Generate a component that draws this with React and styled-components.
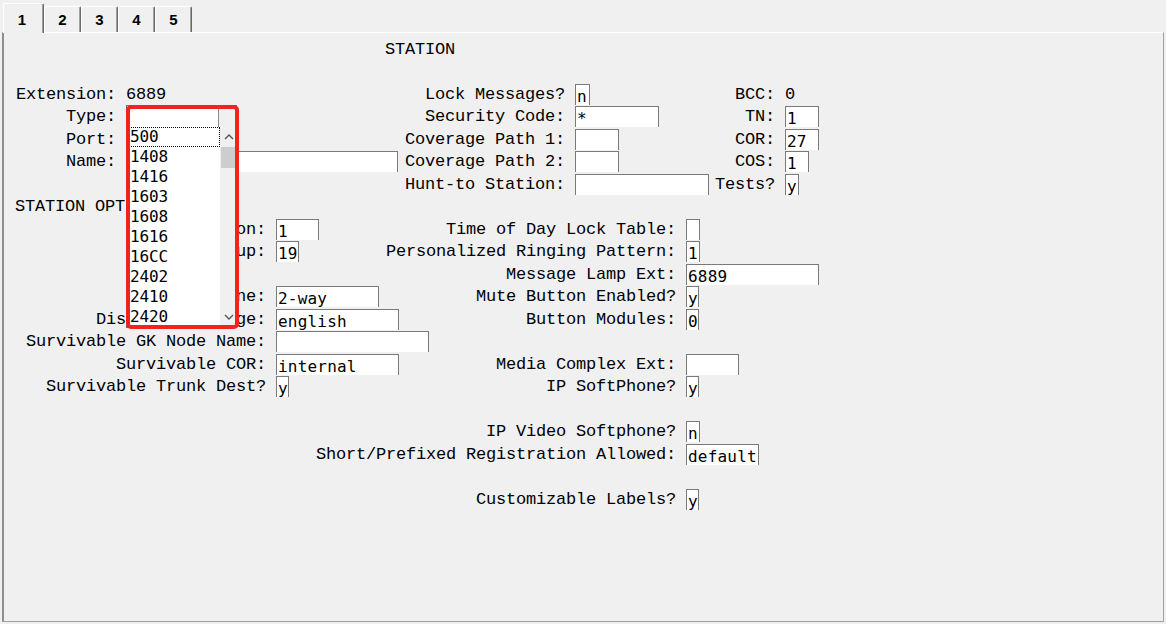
import React from 'react';
import styled, { createGlobalStyle, css } from 'styled-components';

const GlobalStyle = createGlobalStyle`
  html, body {
    margin: 0;
    padding: 0;
    background: #f0f0f0;
  }
  body {
    width: 1166px;
    height: 624px;
    overflow: hidden;
  }
`;

const Window = styled.div`
  position: relative;
  width: 1166px;
  height: 624px;
  display: flex;
  flex-direction: column;
  background: #f0f0f0;
  color: #000;
  font-family: 'Liberation Mono', monospace;
`;

const TabStrip = styled.div`
  display: flex;
  align-items: flex-end;
  height: 32px;
  padding-left: 3px;
  position: relative;
  z-index: 1;
`;

const Tab = styled.div`
  box-sizing: border-box;
  display: flex;
  justify-content: center;
  align-items: center;
  border-top: 1px solid #fff;
  border-left: 1px solid #fff;
  border-right: 1px solid #696969;
  box-shadow: inset -1px 0 0 #a0a0a0;
  border-radius: 2px 2px 0 0;
  background: #f0f0f0;
  font-family: 'Liberation Sans', Arial, sans-serif;
  font-weight: bold;
  font-size: 15px;
  ${(p) =>
    p.active
      ? css`
          width: 41px;
          height: 30px;
          margin-bottom: -1px;
          padding: 2px 3px 0 0;
        `
      : css`
          width: 37px;
          height: 26px;
        `}
`;

const Panel = styled.div`
  flex: 1;
  margin: 0 2px 2px 2px;
  border-top: 1px solid #fff;
  border-left: 2px solid #8e8e8e;
  border-right: 1px solid #a0a0a0;
  border-bottom: 1px solid #a0a0a0;
  padding-top: 5.5px;
`;

const Title = styled.div`
  width: 832px;
  height: 22.5px;
  line-height: 22.5px;
  text-align: center;
  font-size: 17px;
  letter-spacing: -0.2px;
`;

const Row = styled.div`
  display: grid;
  grid-template-columns: ${(p) => p.cols};
  height: 22.5px;
  align-items: center;
`;

const Heading = styled.div`
  height: 22.5px;
  line-height: 22.5px;
  padding-left: 11px;
  font-size: 17px;
  letter-spacing: -0.2px;
  white-space: nowrap;
`;

const Label = styled.div`
  min-width: 0;
  display: flex;
  justify-content: flex-end;
  white-space: nowrap;
  font-size: 17px;
  letter-spacing: -0.2px;
  line-height: 22px;
`;

const Value = styled.div`
  min-width: 0;
  display: flex;
  align-items: center;
  padding-left: 10px;
  white-space: nowrap;
  font-size: 17px;
  letter-spacing: -0.2px;
`;

const Field = styled.div`
  box-sizing: border-box;
  flex: none;
  width: ${(p) => p.w}px;
  height: 21px;
  margin-top: -1px;
  background: #fff;
  border: 1px solid #7a7a7a;
  border-bottom: none;
  padding: 2px 0 0 1px;
  font-family: 'DejaVu Sans Mono', monospace;
  font-size: 16px;
  letter-spacing: 0.2px;
  line-height: 19px;
  overflow: hidden;
  white-space: nowrap;
`;

const Dropdown = styled.div`
  position: absolute;
  left: 126px;
  top: 105px;
  width: 111px;
  z-index: 2;
`;

const Combo = styled.div`
  box-sizing: border-box;
  display: grid;
  grid-template-columns: 1fr 18px;
  height: 22px;
  border-left: 1px solid #646464;
  border-top: 1px solid #7a7a7a;
`;

const ComboText = styled.div`
  background: #fff;
  border-right: 1px solid #8a8a8a;
`;

const ComboButton = styled.div`
  background: #f0f0f0;
`;

const List = styled.div`
  box-sizing: border-box;
  display: grid;
  grid-template-columns: 1fr 17px;
  height: 201px;
  background: #fff;
  border-left: 1px solid #646464;
  border-bottom: 1px solid #7a7a7a;
`;

const Items = styled.div`
  display: flex;
  flex-direction: column;
`;

const Item = styled.div`
  box-sizing: border-box;
  height: 20px;
  line-height: 20px;
  padding-left: 3px;
  font-family: 'DejaVu Sans Mono', monospace;
  font-size: 16px;
  letter-spacing: -0.1px;
  ${(p) =>
    p.focused &&
    css`
      outline: 1px dotted #000;
      outline-offset: -1px;
    `}
`;

const ScrollBar = styled.div`
  display: flex;
  flex-direction: column;
  background: #f0f0f0;
`;

const ScrollArrow = styled.div`
  height: 20px;
  display: flex;
  align-items: center;
  justify-content: center;
`;

const Thumb = styled.div`
  height: 21px;
  margin: 0 1px;
  background: #cdcdcd;
`;

const Track = styled.div`
  flex: 1;
`;

const Highlight = styled.div`
  position: absolute;
  left: 126px;
  top: 105px;
  width: 113px;
  height: 224px;
  box-sizing: border-box;
  border: 4px solid #f2231c;
  border-radius: 5px;
  pointer-events: none;
  z-index: 3;
`;

const Chevron = ({ down }) => (
  <svg width="10" height="6" viewBox="0 0 10 6">
    <polyline
      points={down ? '1,1 5,5 9,1' : '1,5 5,1 9,5'}
      fill="none"
      stroke="#555"
      strokeWidth="1.4"
    />
  </svg>
);

const TOP = '112px 288px 161px 146px 64px 1fr';
const LOW = '262px 170px 240px 1fr';

const ports = ['500', '1408', '1416', '1603', '1608', '1616', '16CC', '2402', '2410', '2420'];

const App = () => {
  return (
    <Window>
      <GlobalStyle />
      <TabStrip>
        <Tab active>1</Tab>
        <Tab>2</Tab>
        <Tab>3</Tab>
        <Tab>4</Tab>
        <Tab>5</Tab>
      </TabStrip>
      <Panel>
        <Title>STATION</Title>
        <Row cols={TOP} />

        <Row cols={TOP}>
          <Label>Extension:</Label>
          <Value>6889</Value>
          <Label>Lock Messages?</Label>
          <Value><Field w={15}>n</Field></Value>
          <Label>BCC:</Label>
          <Value>0</Value>
        </Row>
        <Row cols={TOP}>
          <Label>Type:</Label>
          <Value><Field w={110} /></Value>
          <Label>Security Code:</Label>
          <Value><Field w={84}>*</Field></Value>
          <Label>TN:</Label>
          <Value><Field w={34}>1</Field></Value>
        </Row>
        <Row cols={TOP}>
          <Label>Port:</Label>
          <Value><Field w={92} /></Value>
          <Label>Coverage Path 1:</Label>
          <Value><Field w={44} /></Value>
          <Label>COR:</Label>
          <Value><Field w={34}>27</Field></Value>
        </Row>
        <Row cols={TOP}>
          <Label>Name:</Label>
          <Value><Field w={272} /></Value>
          <Label>Coverage Path 2:</Label>
          <Value><Field w={44} /></Value>
          <Label>COS:</Label>
          <Value><Field w={24}>1</Field></Value>
        </Row>
        <Row cols={TOP}>
          <Label />
          <Value />
          <Label>Hunt-to Station:</Label>
          <Value><Field w={134} /></Value>
          <Label>Tests?</Label>
          <Value><Field w={14}>y</Field></Value>
        </Row>

        <Heading>STATION OPTIONS</Heading>

        <Row cols={LOW}>
          <Label>Location:</Label>
          <Value><Field w={43}>1</Field></Value>
          <Label>Time of Day Lock Table:</Label>
          <Value><Field w={14} /></Value>
        </Row>
        <Row cols={LOW}>
          <Label>Loss Group:</Label>
          <Value><Field w={23}>19</Field></Value>
          <Label>Personalized Ringing Pattern:</Label>
          <Value><Field w={14}>1</Field></Value>
        </Row>
        <Row cols={LOW}>
          <Label />
          <Value />
          <Label>Message Lamp Ext:</Label>
          <Value><Field w={133}>6889</Field></Value>
        </Row>
        <Row cols={LOW}>
          <Label>Speakerphone:</Label>
          <Value><Field w={103}>2-way</Field></Value>
          <Label>Mute Button Enabled?</Label>
          <Value><Field w={13}>y</Field></Value>
        </Row>
        <Row cols={LOW}>
          <Label>Display Language:</Label>
          <Value><Field w={123}>english</Field></Value>
          <Label>Button Modules:</Label>
          <Value><Field w={13}>0</Field></Value>
        </Row>
        <Row cols={LOW}>
          <Label>Survivable GK Node Name:</Label>
          <Value><Field w={153} /></Value>
          <Label />
          <Value />
        </Row>
        <Row cols={LOW}>
          <Label>Survivable COR:</Label>
          <Value><Field w={123}>internal</Field></Value>
          <Label>Media Complex Ext:</Label>
          <Value><Field w={53} /></Value>
        </Row>
        <Row cols={LOW}>
          <Label>Survivable Trunk Dest?</Label>
          <Value><Field w={13}>y</Field></Value>
          <Label>IP SoftPhone?</Label>
          <Value><Field w={13}>y</Field></Value>
        </Row>
        <Row cols={LOW} />
        <Row cols={LOW}>
          <Label />
          <Value />
          <Label>IP Video Softphone?</Label>
          <Value><Field w={14}>n</Field></Value>
        </Row>
        <Row cols={LOW}>
          <Label />
          <Value />
          <Label>Short/Prefixed Registration Allowed:</Label>
          <Value><Field w={73}>default</Field></Value>
        </Row>
        <Row cols={LOW} />
        <Row cols={LOW}>
          <Label />
          <Value />
          <Label>Customizable Labels?</Label>
          <Value><Field w={13}>y</Field></Value>
        </Row>
      </Panel>

      <Dropdown>
        <Combo>
          <ComboText />
          <ComboButton />
        </Combo>
        <List>
          <Items>
            {ports.map((p, i) => (
              <Item key={p} focused={i === 0}>{p}</Item>
            ))}
          </Items>
          <ScrollBar>
            <ScrollArrow><Chevron /></ScrollArrow>
            <Thumb />
            <Track />
            <ScrollArrow><Chevron down /></ScrollArrow>
          </ScrollBar>
        </List>
      </Dropdown>
      <Highlight />
    </Window>
  );
};

export default App;
